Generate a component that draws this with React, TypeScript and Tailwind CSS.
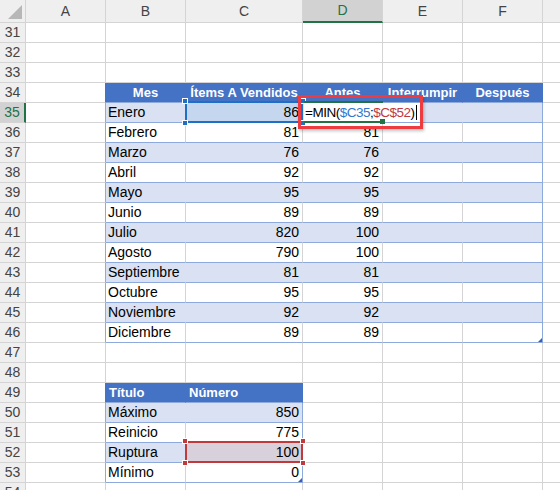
import React from "react";

type Cell = string | undefined;

const COLS = [
  { key: "A", w: "w-[80px]" },
  { key: "B", w: "w-[80px]" },
  { key: "C", w: "w-[117px]" },
  { key: "D", w: "w-[80px]" },
  { key: "E", w: "w-[80px]" },
  { key: "F", w: "w-[80px]" },
  { key: "G", w: "w-[80px]" },
];

const data: Record<number, Record<string, Cell>> = {
  34: { B: "Mes", C: "Ítems A Vendidos", D: "Antes", E: "Interrumpir", F: "Después" },
  35: { B: "Enero", C: "86" },
  36: { B: "Febrero", C: "81", D: "81" },
  37: { B: "Marzo", C: "76", D: "76" },
  38: { B: "Abril", C: "92", D: "92" },
  39: { B: "Mayo", C: "95", D: "95" },
  40: { B: "Junio", C: "89", D: "89" },
  41: { B: "Julio", C: "820", D: "100" },
  42: { B: "Agosto", C: "790", D: "100" },
  43: { B: "Septiembre", C: "81", D: "81" },
  44: { B: "Octubre", C: "95", D: "95" },
  45: { B: "Noviembre", C: "92", D: "92" },
  46: { B: "Diciembre", C: "89", D: "89" },
  49: { B: "Título", C: "Número" },
  50: { B: "Máximo", C: "850" },
  51: { B: "Reinicio", C: "775" },
  52: { B: "Ruptura", C: "100" },
  53: { B: "Mínimo", C: "0" },
};

const rows = Array.from({ length: 24 }, (_, i) => 31 + i);

function inT1(r: number, c: string) {
  return r >= 34 && r <= 46 && ["B", "C", "D", "E", "F"].includes(c);
}
function inT2(r: number, c: string) {
  return r >= 49 && r <= 53 && ["B", "C"].includes(c);
}

function cellClass(r: number, c: string) {
  const t1 = inT1(r, c);
  const t2 = inT2(r, c);
  const header = (t1 && r === 34) || (t2 && r === 49);
  const banded = t1 ? (r - 34) % 2 === 1 : t2 ? (r - 49) % 2 === 1 : false;
  const last = (t1 && c === "F") || (t2 && c === "C");

  let bg = "bg-white";
  let br = "border-r-[#d4d4d4]";
  let bb = "border-b-[#d4d4d4]";

  if (header) {
    bg = "bg-[#4472c4]";
    br = "border-r-[#4472c4]";
    bb = "border-b-[#8ea9db]";
  } else if (banded) {
    bg = "bg-[#d9e1f2]";
    br = last ? "border-r-[#8ea9db]" : "border-r-[#d9e1f2]";
    bb = "border-b-[#8ea9db]";
  } else if (t1 || t2) {
    br = last ? "border-r-[#8ea9db]" : "border-r-[#d4d4d4]";
    bb = "border-b-[#8ea9db]";
  }

  if (c === "A" && ((r >= 34 && r <= 46) || (r >= 49 && r <= 53))) {
    br = r === 34 || r === 49 ? "border-r-[#4472c4]" : "border-r-[#8ea9db]";
  }
  if (r === 35 && c === "C") bg = "bg-[#c5d7ef]";
  if (r === 52 && c === "C") bg = "bg-[#d8d1dc]";

  return `${bg} ${br} ${bb}`;
}

function CellText({ r, v }: { r: number; v: Cell }) {
  if (!v) return null;
  if (r === 34) {
    return (
      <div className="absolute inset-0 flex justify-center whitespace-nowrap text-[13px] font-bold text-white leading-[19px]">
        {v}
      </div>
    );
  }
  if (r === 49) {
    return (
      <div className="absolute inset-0 pl-[3px] whitespace-nowrap text-[13px] font-bold text-white leading-[19px]">
        {v}
      </div>
    );
  }
  const num = /^\d+$/.test(v);
  return (
    <div
      className={
        num
          ? "absolute inset-0 pr-[3px] text-right whitespace-nowrap text-[14px] text-black leading-[19px]"
          : "absolute inset-0 pl-[2px] whitespace-nowrap text-[14px] text-black leading-[19px]"
      }
    >
      {v}
    </div>
  );
}

// range reference highlight drawn while a formula is edited
function RangeMark({ border, handle }: { border: string; handle: string }) {
  return (
    <div className="absolute -left-[1px] -right-[1px] -top-[2px] -bottom-[1px] z-10">
      <div className={`absolute inset-0 border-2 ${border}`} />
      <div className={`absolute -left-[3px] -top-[3px] h-[6px] w-[6px] border border-white ${handle}`} />
      <div className={`absolute -right-[3px] -top-[3px] h-[6px] w-[6px] border border-white ${handle}`} />
      <div className={`absolute -left-[3px] -bottom-[3px] h-[6px] w-[6px] border border-white ${handle}`} />
      <div className={`absolute -right-[3px] -bottom-[3px] h-[6px] w-[6px] border border-white ${handle}`} />
    </div>
  );
}

function EditCell() {
  return (
    <>
      <div className="absolute left-[1px] top-0 z-10 flex h-[19px] w-[116px] items-center bg-white pl-[1px] whitespace-nowrap text-[13.5px] leading-[19px] tracking-[-0.5px] text-black">
        <span>=MIN(</span>
        <span className="text-[#2f79cf]">$C35</span>
        <span>;</span>
        <span className="text-[#c0393b]">$C$52</span>
        <span>)</span>
        <span className="ml-[2px] inline-block h-[15px] w-px bg-black" />
      </div>
      <div className="absolute left-[1px] -right-[1px] -top-[2px] -bottom-[1px] z-10 border-y-2 border-[#217346]">
        <div className="absolute -right-[2px] -bottom-[3px] h-[5px] w-[5px] bg-[#217346]" />
      </div>
      <div className="absolute -left-[5px] -top-[8px] z-20 h-[34px] w-[125px] border-[3px] border-[#ee3b3f] shadow-[1px_2px_3px_rgba(0,0,0,0.25)]" />
    </>
  );
}

function ResizeMark() {
  return (
    <svg className="absolute bottom-0 right-0" width="4" height="4" viewBox="0 0 4 4">
      <polygon points="4,0 4,4 0,4" fill="#3a5fb0" />
    </svg>
  );
}

function Overlay({ r, c }: { r: number; c: string }) {
  if (r === 35 && c === "C") return <RangeMark border="border-[#1f6fc5]" handle="bg-[#1f6fc5]" />;
  if (r === 52 && c === "C") return <RangeMark border="border-[#c0393b]" handle="bg-[#c0393b]" />;
  if (r === 35 && c === "D") return <EditCell />;
  if ((r === 46 && c === "F") || (r === 53 && c === "C")) return <ResizeMark />;
  return null;
}

export default function App() {
  return (
    <div className="relative h-[490px] w-[560px] overflow-hidden bg-white font-['Liberation_Sans',Arial,sans-serif]">
      <div className="flex h-[23px]">
        <div className="flex w-[26px] shrink-0 items-end justify-end border-r border-b border-[#d4d4d4] bg-[#efefef] pb-[3px] pr-[3px]">
          <svg width="14" height="14" viewBox="0 0 14 14">
            <polygon points="14,0 14,14 0,14" fill="#b7b7b7" />
          </svg>
        </div>
        {COLS.map((col) => (
          <div
            key={col.key}
            className={
              col.key === "D"
                ? `${col.w} shrink-0 border-r border-r-[#d4d4d4] border-b-2 border-b-[#217346] bg-[#d2d2d2] text-center text-[14px] leading-[21px] text-[#217346]`
                : `${col.w} shrink-0 border-r border-b border-[#d4d4d4] bg-[#efefef] text-center text-[14px] leading-[22px] text-[#444]`
            }
          >
            {col.key === "G" ? "" : col.key}
          </div>
        ))}
      </div>

      {rows.map((r) => (
        <div key={r} className="flex h-[20px]">
          <div
            className={
              r === 35
                ? "w-[26px] shrink-0 border-r-2 border-b border-r-[#217346] border-b-[#d4d4d4] bg-[#d2d2d2] text-center text-[14px] leading-[19px] text-[#217346]"
                : "w-[26px] shrink-0 border-r border-b border-[#d4d4d4] bg-[#efefef] text-center text-[14px] leading-[19px] text-[#444]"
            }
          >
            {r}
          </div>
          {COLS.map((col) => (
            <div key={col.key} className={`relative ${col.w} shrink-0 border-r border-b ${cellClass(r, col.key)}`}>
              <CellText r={r} v={data[r]?.[col.key]} />
              <Overlay r={r} c={col.key} />
            </div>
          ))}
        </div>
      ))}
    </div>
  );
}
